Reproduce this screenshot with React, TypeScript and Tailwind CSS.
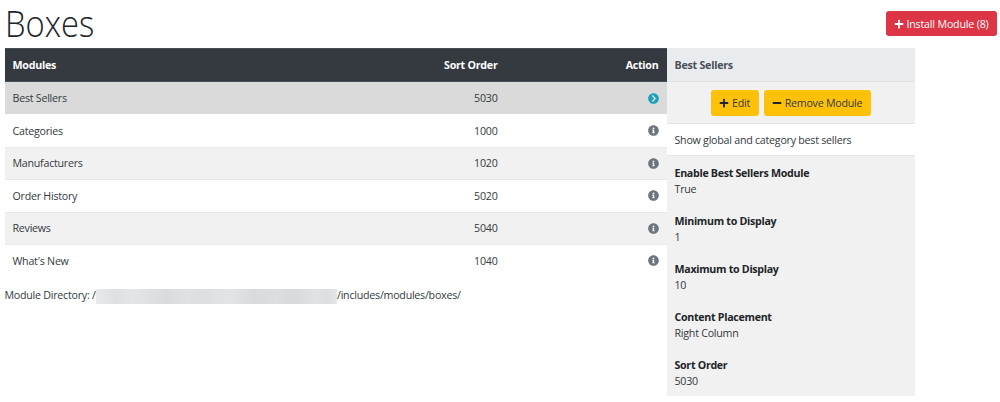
import { FaChevronCircleRight, FaInfoCircle, FaMinus, FaPlus } from "react-icons/fa";

const modules = [
  { name: "Best Sellers", order: 5030 },
  { name: "Categories", order: 1000 },
  { name: "Manufacturers", order: 1020 },
  { name: "Order History", order: 5020 },
  { name: "Reviews", order: 5040 },
  { name: "What's New", order: 1040 },
];

const settings = [
  ["Enable Best Sellers Module", "True"],
  ["Minimum to Display", "1"],
  ["Maximum to Display", "10"],
  ["Content Placement", "Right Column"],
  ["Sort Order", "5030"],
];

const columns = "grid grid-cols-[400px_93px_1fr] items-center px-2";

function rowStyle(index: number) {
  if (index === 0) return "bg-[#dadada]";
  return index % 2 === 0 ? "bg-[#f1f1f1]" : "bg-white";
}

function ModuleTable() {
  return (
    <div className="w-[662px]">
      <div className={`${columns} h-[34px] border-y border-[#454d55] bg-[#343a40] font-bold text-white`}>
        <span>Modules</span>
        <span className="pr-2 text-right">Sort Order</span>
        <span className="text-right">Action</span>
      </div>
      {modules.map((module, index) => (
        <div
          key={module.name}
          className={`${columns} h-[32.4px] ${rowStyle(index)} ${index > 1 ? "border-t border-[#e7e8ea]" : ""}`}
        >
          <span>{module.name}</span>
          <span className="pr-2 text-right">{module.order}</span>
          <span className="flex justify-end">
            {index === 0 ? (
              <FaChevronCircleRight className="size-[11px] text-[#17a2b8]" />
            ) : (
              <FaInfoCircle className="size-[11px] text-[#6c757d]" />
            )}
          </span>
        </div>
      ))}
      <p className="mt-[11px] flex h-4 items-center whitespace-nowrap">
        <span className="w-[91.5px] shrink-0">Module Directory: /</span>
        <span className="mt-[2px] h-[15px] w-[241px] shrink-0 bg-[linear-gradient(90deg,#e8e9ea_0%,#dfe0e1_8%,#e4e5e6_15%,#dedfe0_24%,#d9dbdd_29%,#e0e1e2_38%,#dddee0_44%,#e3e4e5_56%,#d8dadb_65%,#dddee0_75%,#d7d9da_82%,#e1e2e3_91%,#dcddde_96%,#e5e6e7_100%)]" />
        <span>/includes/modules/boxes/</span>
      </p>
    </div>
  );
}

function ModuleInfo() {
  return (
    <div className="h-[348px] w-[248px] bg-[#f1f1f1]">
      <div className="flex h-[34px] items-center border-b border-[#dee2e6] bg-[#e9ecef] px-2 font-bold text-[#495057]">
        Best Sellers
      </div>
      <div className="flex h-[41px] items-center justify-center gap-[5px]">
        <button className="flex h-[26px] w-[48px] items-center justify-center gap-[3px] rounded-[3px] bg-[#ffc107]">
          <FaPlus className="size-[10px] text-[#212529]" />
          Edit
        </button>
        <button className="flex h-[26px] w-[107px] items-center justify-center gap-[3px] rounded-[3px] bg-[#ffc107]">
          <FaMinus className="size-[10px] text-[#212529]" />
          Remove Module
        </button>
      </div>
      <div className="flex h-[33px] items-center border-y border-[#e3e5e8] bg-white px-2">
        Show global and category best sellers
      </div>
      <dl className="flex flex-col gap-4 px-2 pt-[9px] leading-4">
        {settings.map(([label, value]) => (
          <div key={label}>
            <dt className="font-bold tracking-[-0.3px] text-[#212529]">{label}</dt>
            <dd>{value}</dd>
          </div>
        ))}
      </dl>
    </div>
  );
}

export default function App() {
  return (
    <div className="h-[402px] w-[1000px] overflow-hidden bg-white pl-[4.5px] font-['Open_Sans','Noto_Sans',sans-serif] text-[10.67px] leading-4 tracking-[-0.24px] text-[#343a40]">
      <header className="flex h-12 items-start justify-between pr-[3px]">
        <h1 className="origin-left scale-x-[0.91] text-[36px] leading-[48px] font-light tracking-normal text-[#212529]">
          Boxes
        </h1>
        <button className="mt-[11px] flex h-[25px] w-[111px] items-center justify-center gap-[2px] rounded-[3px] bg-[#dc3545] tracking-[-0.18px] text-white">
          <FaPlus className="size-[10px]" />
          Install Module (8)
        </button>
      </header>
      <main className="flex items-start">
        <ModuleTable />
        <ModuleInfo />
      </main>
    </div>
  );
}
